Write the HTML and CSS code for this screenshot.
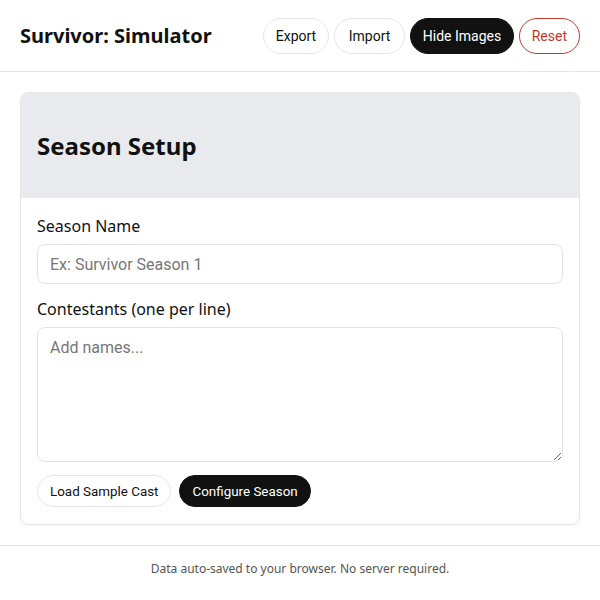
FILE: index.html
```html
<!DOCTYPE html>
<html>
<head>
<meta charset="utf-8">
<link rel="stylesheet" href="styles.css">
</head>
<body>
<header class="topbar">
  <h1 class="brand">Survivor: Simulator</h1>
  <nav class="actions">
    <button class="btn">Export</button>
    <button class="btn btn-wide">Import</button>
    <button class="btn btn-dark">Hide Images</button>
    <button class="btn btn-danger">Reset</button>
  </nav>
</header>
<main class="main">
  <section class="card">
    <div class="card-head">
      <h2 class="card-title">Season Setup</h2>
    </div>
    <div class="card-body">
      <div class="field">
        <label class="label">Season Name</label>
        <input class="input" type="text" placeholder="Ex: Survivor Season 1">
      </div>
      <div class="field">
        <label class="label">Contestants (one per line)</label>
        <textarea class="input textarea" placeholder="Add names..."></textarea>
      </div>
      <div class="row">
        <button class="btn btn-sm">Load Sample Cast</button>
        <button class="btn btn-sm btn-dark">Configure Season</button>
      </div>
    </div>
  </section>
</main>
<footer class="footer">Data auto-saved to your browser. No server required.</footer>
</body>
</html>
```
FILE: styles.css
```css
* { box-sizing: border-box; }
body {
  margin: 0;
  font-family: "Noto Sans", sans-serif;
  color: #111;
  background: #fff;
}
.topbar {
  display: flex;
  align-items: center;
  justify-content: space-between;
  height: 72px;
  padding: 0 20px;
  border-bottom: 1px solid #e6e6e6;
}
.brand {
  margin: 0;
  font-size: 20px;
  font-weight: 700;
}
.actions {
  display: flex;
  gap: 4.5px;
}
.btn {
  font-family: Roboto, sans-serif;
  font-size: 14px;
  height: 36px;
  padding: 0 12px;
  border: 1px solid #e6e6e6;
  border-radius: 18px;
  background: #fff;
  color: #111;
}
.btn-wide {
  padding: 0 14px;
}
.btn-dark {
  background: #111;
  border-color: #111;
  color: #fff;
}
.btn-danger {
  border-color: #c0392b;
  color: #c0392b;
}
.main {
  padding: 20px;
}
.card {
  border: 1px solid #e6e6e6;
  border-radius: 8px;
  overflow: hidden;
  box-shadow: 0 1px 3px rgba(0,0,0,0.04);
}
.card-head {
  background: #e9eaee;
  padding: 16px;
}
.card-title {
  margin: 20px 0;
  font-size: 24px;
  line-height: 33px;
  font-weight: 700;
}
.card-body {
  padding: 16px 16px 17px;
}
.field {
  display: flex;
  flex-direction: column;
  margin-bottom: 13px;
}
.label {
  font-size: 16px;
  line-height: 24px;
  margin-bottom: 6px;
}
.input {
  font-family: Roboto, sans-serif;
  font-size: 16px;
  height: 40px;
  padding: 0 12px;
  border: 1px solid #e3e3e3;
  border-radius: 8px;
  color: #111;
}
.input::placeholder { color: #777; }
.textarea {
  height: 135px;
  padding: 10px 12px;
  resize: vertical;
}
.row {
  display: flex;
  gap: 8px;
}
.btn-sm {
  height: 32px;
  font-size: 13.4px;
}
.footer {
  border-top: 1px solid #e6e6e6;
  padding: 14px 20px;
  text-align: center;
  font-size: 12px;
  color: #555;
}
```
